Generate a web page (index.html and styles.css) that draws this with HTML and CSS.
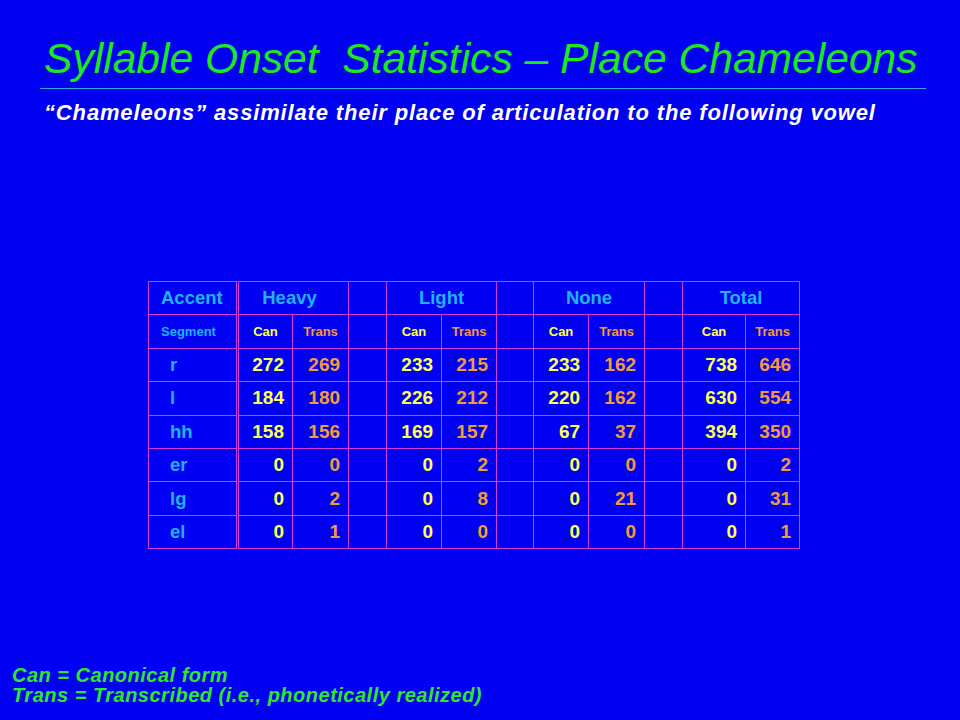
FILE: index.html
```html
<!DOCTYPE html>
<html>
<head>
<meta charset="utf-8">
<link rel="stylesheet" href="styles.css">
</head>
<body>
<div class="slide">
  <header class="head">
    <h1 class="title">Syllable Onset&nbsp; Statistics – Place Chameleons</h1>
    <div class="rule"></div>
    <p class="subtitle">“Chameleons” assimilate their place of articulation to the following vowel</p>
  </header>

  <div class="table-wrap">
    <table class="stats">
      <colgroup>
        <col class="c-acc">
        <col class="c-num"><col class="c-num2">
        <col class="c-gap">
        <col class="c-num"><col class="c-num">
        <col class="c-gap2">
        <col class="c-num"><col class="c-num2">
        <col class="c-gap">
        <col class="c-tot"><col class="c-num3">
      </colgroup>
      <tr class="r-head">
        <td class="acc hd">Accent</td>
        <td class="hd heavy" colspan="2">Heavy</td>
        <td></td>
        <td class="hd" colspan="2">Light</td>
        <td></td>
        <td class="hd" colspan="2">None</td>
        <td></td>
        <td class="hd" colspan="2">Total</td>
      </tr>
      <tr class="r-sub">
        <td class="acc seg-hd">Segment</td>
        <td class="sub can">Can</td><td class="sub trans">Trans</td>
        <td></td>
        <td class="sub can">Can</td><td class="sub trans">Trans</td>
        <td></td>
        <td class="sub can">Can</td><td class="sub trans">Trans</td>
        <td></td>
        <td class="sub can">Can</td><td class="sub trans">Trans</td>
      </tr>
      <tr>
        <td class="acc seg">r</td>
        <td class="n can">272</td><td class="n trans">269</td><td></td>
        <td class="n can">233</td><td class="n trans">215</td><td></td>
        <td class="n can">233</td><td class="n trans">162</td><td></td>
        <td class="n can">738</td><td class="n trans">646</td>
      </tr>
      <tr>
        <td class="acc seg">l</td>
        <td class="n can">184</td><td class="n trans">180</td><td></td>
        <td class="n can">226</td><td class="n trans">212</td><td></td>
        <td class="n can">220</td><td class="n trans">162</td><td></td>
        <td class="n can">630</td><td class="n trans">554</td>
      </tr>
      <tr>
        <td class="acc seg">hh</td>
        <td class="n can">158</td><td class="n trans">156</td><td></td>
        <td class="n can">169</td><td class="n trans">157</td><td></td>
        <td class="n can">67</td><td class="n trans">37</td><td></td>
        <td class="n can">394</td><td class="n trans">350</td>
      </tr>
      <tr>
        <td class="acc seg">er</td>
        <td class="n can">0</td><td class="n trans">0</td><td></td>
        <td class="n can">0</td><td class="n trans">2</td><td></td>
        <td class="n can">0</td><td class="n trans">0</td><td></td>
        <td class="n can">0</td><td class="n trans">2</td>
      </tr>
      <tr>
        <td class="acc seg">lg</td>
        <td class="n can">0</td><td class="n trans">2</td><td></td>
        <td class="n can">0</td><td class="n trans">8</td><td></td>
        <td class="n can">0</td><td class="n trans">21</td><td></td>
        <td class="n can">0</td><td class="n trans">31</td>
      </tr>
      <tr>
        <td class="acc seg">el</td>
        <td class="n can">0</td><td class="n trans">1</td><td></td>
        <td class="n can">0</td><td class="n trans">0</td><td></td>
        <td class="n can">0</td><td class="n trans">0</td><td></td>
        <td class="n can">0</td><td class="n trans">1</td>
      </tr>
    </table>
  </div>

  <footer class="legend">
    <div>Can = Canonical form</div>
    <div>Trans = Transcribed (i.e., phonetically realized)</div>
  </footer>
</div>
</body>
</html>
```

FILE: styles.css
```css
html, body {
  margin: 0;
  padding: 0;
}
body {
  background: #0000f2;
  font-family: "Liberation Sans", Arial, sans-serif;
}
.slide {
  width: 960px;
  height: 720px;
  display: flex;
  flex-direction: column;
  box-sizing: border-box;
}
.head {
  padding: 37px 0 0 0;
}
.title {
  margin: 0 0 0 44px;
  font-size: 42.6px;
  line-height: 43px;
  font-style: italic;
  font-weight: normal;
  color: #1ee81e;
  white-space: nowrap;
}
.rule {
  margin: 8px 34px 0 40px;
  height: 1px;
  background: #2fa8f0;
}
.subtitle {
  margin: 13px 0 0 44px;
  font-size: 22px;
  line-height: 22px;
  letter-spacing: 0.85px;
  font-weight: bold;
  font-style: italic;
  color: #ffffff;
  white-space: nowrap;
}
.table-wrap {
  padding: 157px 0 0 148px;
}
.stats {
  border-collapse: collapse;
  table-layout: fixed;
  width: 651px;
}
.c-acc { width: 89px; }
.c-num { width: 55px; }
.c-num2 { width: 56px; }
.c-num3 { width: 54px; }
.c-gap { width: 38px; }
.c-gap2 { width: 37px; }
.c-tot { width: 63px; }
.stats td {
  border: 1px solid #d63ae6;
  height: 32.4px;
  padding: 0;
  vertical-align: middle;
  font-weight: bold;
  white-space: nowrap;
}
.stats td.acc {
  border-right: 3px double #d63ae6;
}
.hd {
  color: #1eb4ff;
  font-size: 18.5px;
  text-align: center;
}
.hd.heavy {
  padding-right: 8px;
}
.hd.acc {
  text-align: left;
  padding-left: 12px;
}
.seg-hd {
  color: #1eb4ff;
  font-size: 13px;
  padding-left: 12px !important;
}
.sub {
  font-size: 13px;
  text-align: center;
}
.seg {
  color: #1eb4ff;
  font-size: 18.5px;
  padding-left: 21px !important;
}
.n {
  font-size: 19px;
  text-align: right;
  padding-right: 8px !important;
}
.can { color: #ffff55; }
.trans { color: #f59a3c; }
.legend {
  margin-top: auto;
  padding: 0 0 15px 12px;
  font-size: 20px;
  line-height: 20px;
  letter-spacing: 0.5px;
  font-weight: bold;
  font-style: italic;
  color: #2ee82e;
}
```
